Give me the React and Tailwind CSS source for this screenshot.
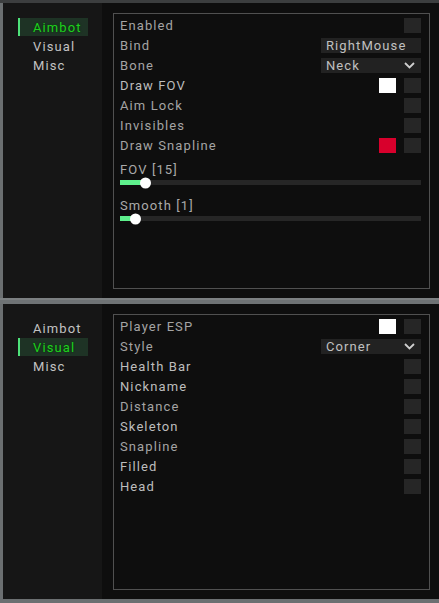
import React from "react";

const FONT = { fontFamily: "Roboto, 'Noto Sans', sans-serif" };

function Checkbox() {
  return <div className="h-[15px] w-[17px] bg-[#262626]" />;
}

function Swatch({ color }) {
  return <div className={`h-[15px] w-[17px] ${color}`} />;
}

function Chevron() {
  return (
    <svg width="11" height="7" viewBox="0 0 11 7" className="block">
      <path d="M1 1 L5.5 5.5 L10 1" fill="none" stroke="#cfcfcf" strokeWidth="1.8" />
    </svg>
  );
}

function Field({ text, dropdown }) {
  return (
    <div className="flex h-[15px] w-[100px] items-center justify-between bg-[#222222] pl-[5px] pr-[6px]">
      <span className="text-[13px] leading-[15px] tracking-[1.1px] text-[#c0c0c0]">{text}</span>
      {dropdown && <Chevron />}
    </div>
  );
}

function Row({ label, bright, children }) {
  return (
    <div className="flex h-[15px] items-center justify-between">
      <span
        className={`text-[13px] leading-[15px] tracking-[1.1px] ${
          bright ? "text-[#bdbdbd]" : "text-[#a4a4a4]"
        }`}
      >
        {label}
      </span>
      <div className="flex items-center gap-[8px]">{children}</div>
    </div>
  );
}

function Slider({ label, fill, className }) {
  return (
    <div className={className}>
      <div className="text-[13px] leading-[15px] tracking-[1.1px] text-[#aaaaaa]">{label}</div>
      <div className="relative mt-[3px] h-[5px] bg-[#262626]">
        <div className="h-full bg-[#5ef08c]" style={{ width: fill }} />
        <div
          className="absolute top-1/2 h-[11px] w-[11px] -translate-y-1/2 rounded-full bg-white"
          style={{ left: fill - 5.5 }}
        />
      </div>
    </div>
  );
}

function Sidebar({ active }) {
  const items = ["Aimbot", "Visual", "Misc"];
  return (
    <div className="flex w-[99px] shrink-0 flex-col gap-[1px] bg-[#161616] pt-[15px]">
      {items.map((it) => (
        <div
          key={it}
          className={`ml-[15px] flex h-[18px] w-[70px] items-center ${
            it === active ? "border-l-2 border-[#4ee27a] bg-[#1e3325] pl-[13px]" : "pl-[15px]"
          }`}
        >
          <span
            className={`text-[13px] leading-[15px] tracking-[1.1px] ${
              it === active
                ? "text-[#1fd01f] [text-shadow:0_0_2px_#063806]"
                : "text-[#c2c2c2]"
            }`}
          >
            {it}
          </span>
        </div>
      ))}
    </div>
  );
}

function Panel({ active, children }) {
  return (
    <div className="ml-[3px] flex h-[295px] w-[436px]">
      <Sidebar active={active} />
      <div className="flex flex-1 bg-[#0e0e0e] pb-[9px] pl-[11px] pr-[9px] pt-[10px]">
        <div className="flex flex-1 flex-col border border-[#505050] pl-[6px] pr-[8px] pt-[4px]">
          {children}
        </div>
      </div>
    </div>
  );
}

export default function App() {
  return (
    <div className="h-[603px] w-[439px] overflow-hidden bg-[#6b6f71]" style={FONT}>
      <div className="h-[3px] bg-[#3c3e3f]" />
      <Panel active="Aimbot">
        <div className="flex flex-col gap-[5px]">
          <Row label="Enabled">
            <Checkbox />
          </Row>
          <Row label="Bind">
            <Field text="RightMouse" />
          </Row>
          <Row label="Bone">
            <Field text="Neck" dropdown />
          </Row>
          <Row label="Draw FOV" bright>
            <Swatch color="bg-white" />
            <Checkbox />
          </Row>
          <Row label="Aim Lock">
            <Checkbox />
          </Row>
          <Row label="Invisibles">
            <Checkbox />
          </Row>
          <Row label="Draw Snapline">
            <Swatch color="bg-[#d8002c]" />
            <Checkbox />
          </Row>
        </div>
        <Slider label="FOV [15]" fill={25} className="mt-[9px]" />
        <Slider label="Smooth [1]" fill={15} className="mt-[13px]" />
      </Panel>
      <div className="h-[6px] border-t-2 border-[#7c8082] bg-[#6f7375]" />
      <Panel active="Visual">
        <div className="flex flex-col gap-[5px]">
          <Row label="Player ESP">
            <Swatch color="bg-white" />
            <Checkbox />
          </Row>
          <Row label="Style">
            <Field text="Corner" dropdown />
          </Row>
          <Row label="Health Bar" bright>
            <Checkbox />
          </Row>
          <Row label="Nickname" bright>
            <Checkbox />
          </Row>
          <Row label="Distance">
            <Checkbox />
          </Row>
          <Row label="Skeleton" bright>
            <Checkbox />
          </Row>
          <Row label="Snapline">
            <Checkbox />
          </Row>
          <Row label="Filled" bright>
            <Checkbox />
          </Row>
          <Row label="Head" bright>
            <Checkbox />
          </Row>
        </div>
      </Panel>
    </div>
  );
}
